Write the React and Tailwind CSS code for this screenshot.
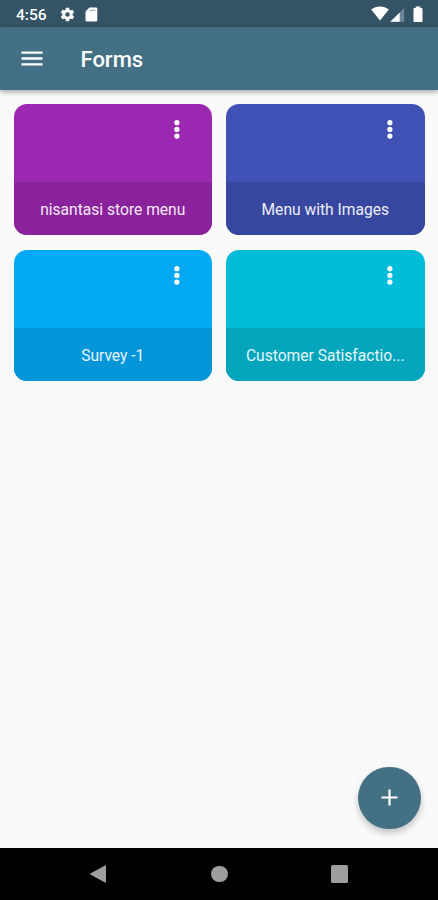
import React from 'react';

const forms = [
  { title: 'nisantasi store menu', body: 'bg-[#9c27b0]', strip: 'bg-[#8a229b]' },
  { title: 'Menu with Images', body: 'bg-[#3f51b5]', strip: 'bg-[#37479f]' },
  { title: 'Survey -1', body: 'bg-[#03a9f4]', strip: 'bg-[#0395d7]' },
  { title: 'Customer Satisfaction', shown: 'Customer Satisfactio...', body: 'bg-[#00bcd8]', strip: 'bg-[#02a5bc]' },
];

function StatusBar() {
  return (
    <div className="flex h-[27px] shrink-0 items-center bg-[#345365] text-white">
      <span className="ml-[16px] mt-[4px] w-[31px] whitespace-nowrap text-[15.5px] leading-none font-medium">4:56</span>
      <svg className="ml-[12px] mt-[1px] size-[17px]" viewBox="0 0 24 24" fill="currentColor">
        <path d="M19.14 12.94c.04-.3.06-.61.06-.94 0-.32-.02-.64-.07-.94l2.03-1.58a.49.49 0 0 0 .12-.61l-1.92-3.32a.488.488 0 0 0-.59-.22l-2.39.96c-.5-.38-1.03-.7-1.62-.94l-.36-2.54a.484.484 0 0 0-.48-.41h-3.84c-.24 0-.43.17-.47.41l-.36 2.54c-.59.24-1.13.57-1.62.94l-2.39-.96c-.22-.08-.47 0-.59.22L2.74 8.87c-.12.21-.08.47.12.61l2.03 1.58c-.05.3-.09.63-.09.94s.02.64.07.94l-2.03 1.58a.49.49 0 0 0-.12.61l1.92 3.32c.12.22.37.29.59.22l2.39-.96c.5.38 1.03.7 1.62.94l.36 2.54c.05.24.24.41.48.41h3.84c.24 0 .44-.17.47-.41l.36-2.54c.59-.24 1.13-.56 1.62-.94l2.39.96c.22.08.47 0 .59-.22l1.92-3.32c.12-.22.07-.47-.12-.61l-2.01-1.58zM12 15.2A3.2 3.2 0 1 1 12 8.8a3.2 3.2 0 0 1 0 6.4z" />
      </svg>
      <svg className="ml-[9px] mt-[1px] h-[15px] w-[13px]" viewBox="0 0 13 15" fill="currentColor">
        <path d="M4.5.5H11a1.3 1.3 0 0 1 1.3 1.3v11.4a1.3 1.3 0 0 1-1.3 1.3H1.8a1.3 1.3 0 0 1-1.3-1.3V4.5z" />
        <path d="M4.6 2.6h6v1.5h-6z" fill="#345365" opacity=".4" />
      </svg>
      <svg className="ml-auto h-[15px] w-[18px]" viewBox="0 0 18 15" fill="currentColor">
        <path d="M9 14.6.2 3.6C2.6 1.6 5.6.5 9 .5s6.4 1.1 8.8 3.1z" />
      </svg>
      <svg className="ml-[1px] mt-[2px] h-[14px] w-[15px]" viewBox="0 0 15 14" fill="currentColor">
        <path d="M14.2 0v13.8H.4z" opacity=".3" />
        <path d="M9.7 4.5v9.3H.4z" />
      </svg>
      <svg className="mr-[15px] ml-[8px] mt-[1px] h-[17px] w-[10px]" viewBox="0 0 10 17" fill="currentColor">
        <path d="M2.7.5h4.6V2h1c.7 0 1.2.5 1.2 1.2v11.7c0 .7-.5 1.2-1.2 1.2H1.7c-.7 0-1.2-.5-1.2-1.2V3.2C.5 2.5 1 2 1.7 2h1z" />
      </svg>
    </div>
  );
}

function AppBar() {
  return (
    <header className="z-10 flex h-[62.5px] shrink-0 items-center bg-[#437085] text-white shadow-[0_2px_5px_rgba(0,0,0,0.35)]">
      <button aria-label="Open menu" className="ml-[21px]">
        <svg className="h-[15px] w-[22px]" viewBox="0 0 22 15" fill="currentColor">
          <path d="M.5.5h21v2.3H.5zM.5 6.35h21v2.3H.5zM.5 12.2h21v2.3H.5z" />
        </svg>
      </button>
      <h1 className="ml-[37.5px] mt-[4px] text-[22px] leading-none font-medium">Forms</h1>
    </header>
  );
}

function FormCard({ form }) {
  return (
    <article className={`flex h-[131.5px] flex-col overflow-hidden rounded-[13px] ${form.body}`}>
      <div className="flex flex-1 items-start justify-end pt-[12.5px] pr-[22px]">
        <button aria-label="Options" className="text-white">
          <svg className="size-[27px]" viewBox="0 0 27 27" fill="currentColor">
            <circle cx="13.9" cy="6.7" r="2.6" />
            <circle cx="13.9" cy="13.4" r="2.6" />
            <circle cx="13.9" cy="20.1" r="2.6" />
          </svg>
        </button>
      </div>
      <div className={`flex h-[53.5px] items-center justify-center pt-[5.5px] ${form.strip}`}>
        <span className="whitespace-nowrap text-[15.6px] leading-none text-white/90">{form.shown || form.title}</span>
      </div>
    </article>
  );
}

function NavBar() {
  return (
    <nav className="flex h-[52.5px] shrink-0 items-center bg-black text-[#9e9e9e]">
      <svg className="ml-[89px] h-[18px] w-[17px]" viewBox="0 0 17 18" fill="currentColor">
        <path d="M16 .4c.5-.3 1 0 1 .5v16.2c0 .5-.5.8-1 .5L1.4 9.5c-.4-.3-.4-.7 0-1z" />
      </svg>
      <div className="ml-[105px] size-[16.5px] rounded-full bg-[#9e9e9e]" />
      <div className="ml-[103px] size-[17.5px] rounded-[1.5px] bg-[#9e9e9e]" />
    </nav>
  );
}

export default function App() {
  return (
    <div className="relative flex h-[900px] w-[438px] flex-col overflow-hidden bg-[#fafafa] font-[Roboto,'Liberation_Sans',sans-serif]">
      <StatusBar />
      <AppBar />
      <main className="grid flex-1 grid-cols-2 content-start gap-x-[14px] gap-y-[14.5px] px-[13.5px] pt-[14px]">
        {forms.map((form) => (
          <FormCard key={form.title} form={form} />
        ))}
      </main>
      <button
        aria-label="Add form"
        className="absolute right-[17.5px] bottom-[71px] flex size-[62.5px] items-center justify-center rounded-full bg-[#437085] text-white shadow-[0_4px_7px_rgba(0,0,0,0.22)]"
      >
        <svg className="size-[17px]" viewBox="0 0 17 17" fill="currentColor">
          <path d="M7.4.5h2.2v6.9h6.9v2.2H9.6v6.9H7.4V9.6H.5V7.4h6.9z" />
        </svg>
      </button>
      <NavBar />
    </div>
  );
}
